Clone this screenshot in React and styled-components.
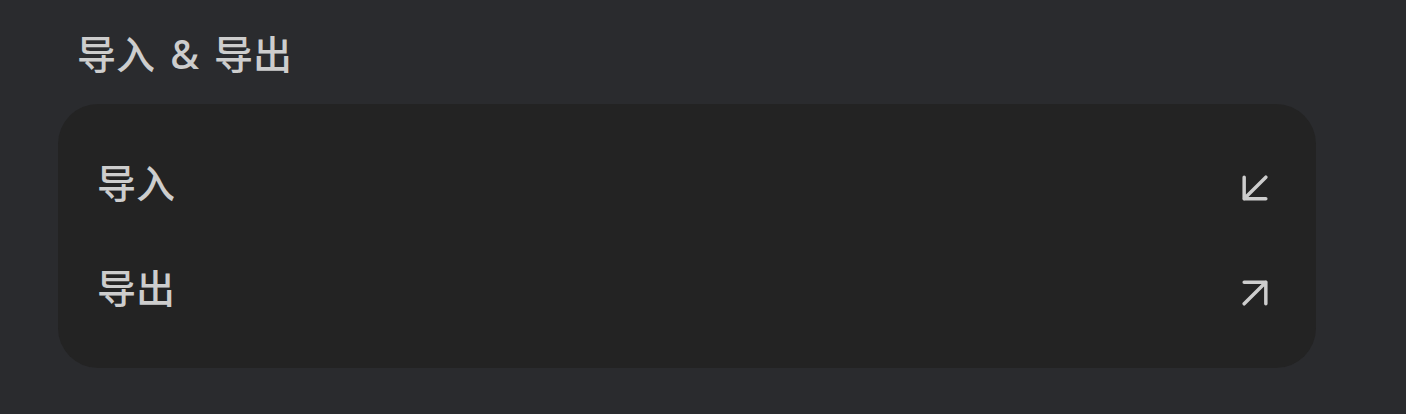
import React from "react";
import styled, { createGlobalStyle } from "styled-components";

const Global = createGlobalStyle`
  html, body { margin: 0; padding: 0; background: #2a2b2e; }
  body { font-family: "Noto Sans", "Noto Sans CJK SC", sans-serif; }
`;

const Page = styled.div`
  width: 1406px;
  height: 414px;
  box-sizing: border-box;
  padding: 30px 0 0 58px;
  background: #2a2b2e;
`;

const Title = styled.h2`
  margin: 0 0 26px 19px;
  font-size: 39px;
  line-height: 48px;
  font-weight: 500;
  word-spacing: 5px;
  color: #cdcdcd;
`;

const Card = styled.div`
  width: 1258px;
  box-sizing: border-box;
  background: #232323;
  border-radius: 40px;
  padding: 27px 40px 27px 39px;
  display: flex;
  flex-direction: column;
`;

const Row = styled.div`
  height: 105px;
  display: flex;
  align-items: center;
  justify-content: space-between;
`;

const Label = styled.span`
  font-size: 39px;
  line-height: 48px;
  font-weight: 500;
  color: #cdcdcd;
  margin-bottom: 2px;
`;

const IconBox = styled.span`
  display: flex;
  width: 26px;
  height: 26px;
  margin: 8px 8px 0 0;
  color: #cdcdcd;
`;

const Arrow = ({ d }) => (
  <svg width="26" height="26" viewBox="6 6 12 12" fill="none" stroke="currentColor"
    strokeWidth="1.6" strokeLinecap="round" strokeLinejoin="round">
    <path d={d} />
  </svg>
);

export default function App() {
  return (
    <>
      <Global />
      <Page>
        <Title>导入 &amp; 导出</Title>
        <Card>
          <Row>
            <Label>导入</Label>
            <IconBox><Arrow d="M17 7 7 17M7 7v10h10" /></IconBox>
          </Row>
          <Row>
            <Label>导出</Label>
            <IconBox><Arrow d="M7 17 17 7M7 7h10v10" /></IconBox>
          </Row>
        </Card>
      </Page>
    </>
  );
}
